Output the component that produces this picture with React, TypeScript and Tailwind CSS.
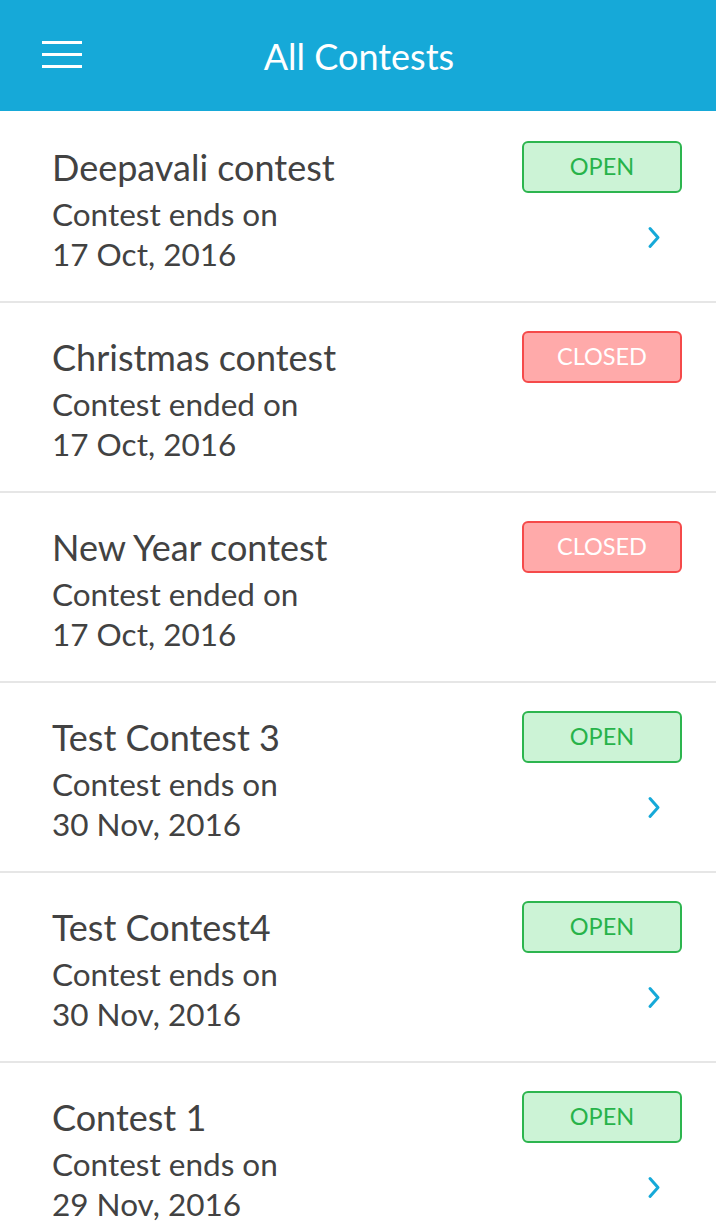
type Contest = {
  name: string;
  open: boolean;
  date: string;
};

const contests: Contest[] = [
  { name: "Deepavali contest", open: true, date: "17 Oct, 2016" },
  { name: "Christmas contest", open: false, date: "17 Oct, 2016" },
  { name: "New Year contest", open: false, date: "17 Oct, 2016" },
  { name: "Test Contest 3", open: true, date: "30 Nov, 2016" },
  { name: "Test Contest4", open: true, date: "30 Nov, 2016" },
  { name: "Contest 1", open: true, date: "29 Nov, 2016" },
];

function Badge({ open }: { open: boolean }) {
  if (open) {
    return (
      <div className="w-[160px] h-[52px] rounded-[6px] border-2 border-[#2db54f] bg-[#ccf3d6] flex items-center justify-center text-[23.5px] leading-none text-[#27b34a]">
        OPEN
      </div>
    );
  }
  return (
    <div className="w-[160px] h-[52px] rounded-[6px] border-2 border-[#f54a4a] bg-[#ffaaaa] flex items-center justify-center text-[23.5px] leading-none text-white">
      CLOSED
    </div>
  );
}

function ContestRow({ c }: { c: Contest }) {
  return (
    <div className="h-[190px] border-b-2 border-[#e6e6e6] flex justify-between pl-[52px] pr-[34px] overflow-hidden">
      <div className="pt-[34px] text-[#424242]">
        <div className="text-[36px] leading-[40px]">{c.name}</div>
        <div className="mt-[7px] text-[31.5px] leading-[40px]">
          <div>{c.open ? "Contest ends on" : "Contest ended on"}</div>
          <div>{c.date}</div>
        </div>
      </div>
      <div className="pt-[28px] flex flex-col items-end">
        <Badge open={c.open} />
        {c.open && (
          <svg width="16" height="25" viewBox="0 0 16 25" className="mt-[32px] mr-[20px]">
            <polyline points="4,3.5 12,12.5 4,21.5" fill="none" stroke="#16a9d8" strokeWidth="3" strokeLinecap="round" strokeLinejoin="round" />
          </svg>
        )}
      </div>
    </div>
  );
}

export default function App() {
  return (
    <div className="w-[716px] h-[1229px] overflow-hidden bg-white font-['Lato',sans-serif]">
      <div className="h-[111px] bg-[#16a9d8] relative flex items-center justify-center">
        <div className="absolute left-[42px] top-[41px] w-[40px] flex flex-col gap-[9px]">
          <div className="h-[3px] bg-white" />
          <div className="h-[3px] bg-white" />
          <div className="h-[3px] bg-white" />
        </div>
        <h1 className="text-white text-[36px] leading-[40px] ml-[2px]">All Contests</h1>
      </div>
      <div className="pt-[2px]">
        {contests.map((c) => (
          <ContestRow key={c.name} c={c} />
        ))}
      </div>
    </div>
  );
}
